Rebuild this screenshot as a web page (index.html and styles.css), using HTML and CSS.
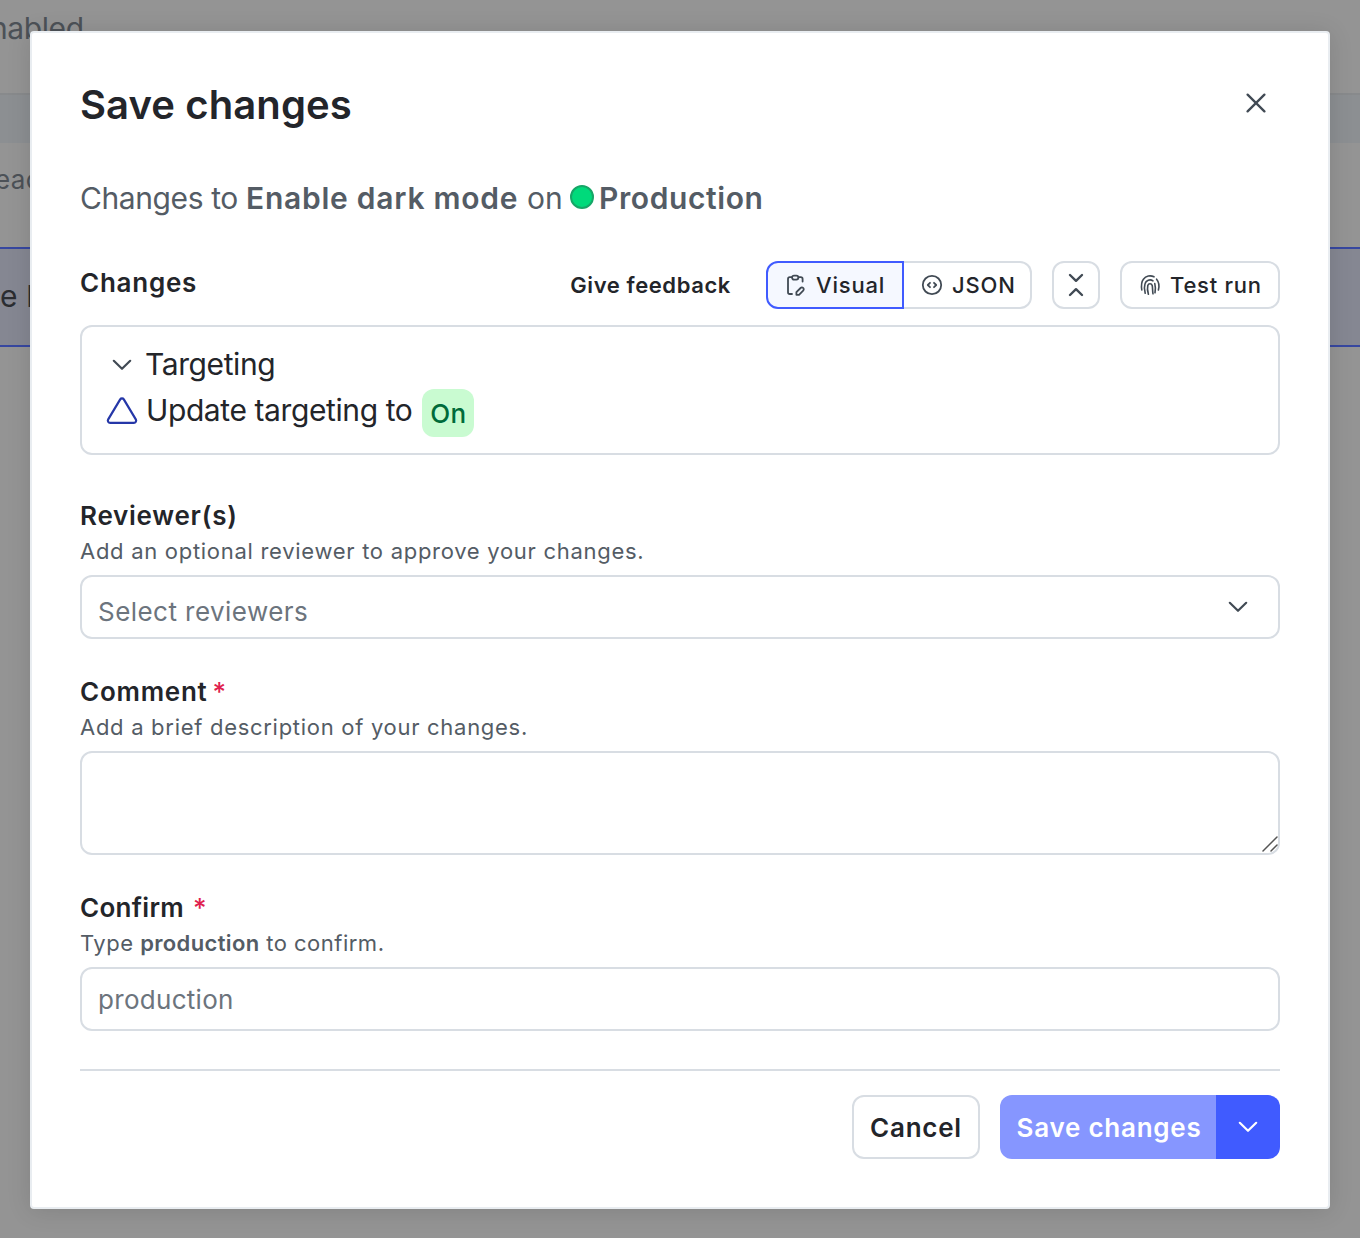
FILE: index.html
```html
<!DOCTYPE html>
<html lang="en">
<head>
<meta charset="utf-8">
<title>Save changes</title>
<link rel="stylesheet" href="styles.css">
</head>
<body>
<div class="app">
  <div class="page">
    <div class="page-head"><span class="page-status">nabled</span></div>
    <div class="page-band"></div>
    <div class="page-note">eac</div>
    <div class="page-row">e F</div>
  </div>

  <main class="modal" role="dialog" aria-labelledby="title">
    <header class="modal-header">
      <h1 class="title" id="title">Save changes</h1>
      <button class="close" aria-label="Close">
        <svg class="icon-close" viewBox="0 0 10 10"><path d="M.8.8l8.4 8.4M9.200.8L.8 9.200"/></svg>
      </button>
    </header>

    <p class="summary"><span class="summary-lead">Changes to</span> <strong class="flag-name">Enable dark mode</strong> <span class="summary-on">on</span> <span class="env-dot"></span><strong class="env-name">Production</strong></p>

    <section>
      <div class="toolbar">
        <h2 class="label toolbar-label">Changes</h2>
        <a class="feedback">Give feedback</a>
        <div class="toggle">
          <button class="btn-small toggle-on">
            <svg class="icon" viewBox="0 0 12 12"><path d="M4 2.100H2.900a.9.9 0 0 0-.9.9v6.600a.9.9 0 0 0 .9.9h1.100M7.300 2.100h1.100a.9.9 0 0 1 .9.9v1.300"/><rect x="4" y="1.300" width="3.200" height="2" rx="1"/><path d="M6.200 10.900v-1.300l2.100-2.100a.9.9 0 0 1 1.300 0 .9.9 0 0 1 0 1.300L7.500 10.900z"/></svg>
            Visual
          </button>
          <button class="btn-small toggle-off">
            <svg class="icon" viewBox="0 0 12 12"><circle cx="6" cy="6" r="4.600"/><path d="M5 4.900L3.900 6 5 7.100M7 4.900L8.100 6 7 7.100"/></svg>
            JSON
          </button>
        </div>
        <button class="btn-small btn-square" aria-label="Collapse all">
          <svg class="icon icon-collapse" viewBox="0 0 12 12"><path d="M3 1L6 3.900 9 1M3 11L6 8.100 9 11"/></svg>
        </button>
        <button class="btn-small btn-test">
          <svg class="icon icon-print" viewBox="0 0 12 12"><path d="M1.900 8.500C1.600 6.500 1.600 4.500 2.700 3.100A4.200 4.200 0 0 1 8 1.900M9.300 3.100c1.300 1.600 1.400 3.600.9 5.400M3.600 10.100C3.100 8.300 3.100 6.600 3.500 5.400A2.600 2.600 0 0 1 7.500 3.900M8.400 5.300c.4 1.500.4 2.800.1 4.600M5.200 10.600C4.700 9 4.600 7.500 4.900 6.200a1.150 1.150 0 0 1 2.200 0c.3 1.500.1 2.700.4 4.200"/></svg>
          Test run
        </button>
      </div>
      <div class="changes">
        <div class="change change-group">
          <svg class="icon-chevron" viewBox="0 0 10 6"><path d="M.9.9L5 4.900 9.100.9"/></svg>
          <span class="change-text">Targeting</span>
        </div>
        <div class="change">
          <svg class="icon-delta" viewBox="0 0 16 14"><path d="M7.100 1.200L1.100 11.200a1.150 1.150 0 0 0 1 1.750h11.800a1.150 1.150 0 0 0 1-1.750L8.900 1.200a1.070 1.070 0 0 0-1.800 0z"/></svg>
          <span class="change-text">Update targeting to</span>
          <span class="badge">On</span>
        </div>
      </div>
    </section>

    <section class="field field-first">
      <h2 class="label">Reviewer(s)</h2>
      <p class="hint">Add an optional reviewer to approve your changes.</p>
      <div class="control select">
        <span class="select-text">Select reviewers</span>
        <svg class="icon-chevron" viewBox="0 0 10 6"><path d="M.9.9L5 4.900 9.100.9"/></svg>
      </div>
    </section>

    <section class="field">
      <h2 class="label">Comment<span class="required required-near">*</span></h2>
      <p class="hint">Add a brief description of your changes.</p>
      <div class="comment-wrap">
        <textarea class="control comment" aria-label="Comment"></textarea>
        <svg class="grip" viewBox="0 0 16 16"><path d="M1 15L15 1M9 15l6-6"/></svg>
      </div>
    </section>

    <section class="field">
      <h2 class="label label-tight">Confirm<span class="required">*</span></h2>
      <p class="hint hint-tight">Type <strong class="hint-key">production</strong> to confirm.</p>
      <input class="control confirm" placeholder="production" aria-label="Confirm">
    </section>

    <footer class="footer">
      <button class="btn btn-cancel">Cancel</button>
      <div class="split">
        <button class="btn btn-save">Save changes</button>
        <button class="btn btn-more" aria-label="More options">
          <svg class="icon-chevron" viewBox="0 0 10 6"><path d="M.9.9L5 4.900 9.100.9"/></svg>
        </button>
      </div>
    </footer>
  </main>
</div>
</body>
</html>
```
FILE: styles.css
```css
* { box-sizing: border-box; }

body {
  margin: 0;
  background: #949494;
  font-family: Inter, "Liberation Sans", sans-serif;
  color: #23252a;
}

h1, h2, p { margin: 0; }

button, input, textarea { font-family: inherit; margin: 0; }

svg {
  display: block;
  flex: none;
  fill: none;
  stroke: #414a54;
  stroke-linecap: round;
  stroke-linejoin: round;
}

.app {
  position: relative;
  height: 1238px;
  padding: 31px 30px 0;
  overflow: hidden;
}

/* Page behind the dialog */
.page {
  position: absolute;
  inset: 0;
  color: #4c5157;
}

.page-head {
  height: 95px;
  padding-top: 4px;
  border-bottom: 2px solid #888a8c;
  font-size: 30px;
  letter-spacing: -.4px;
  line-height: 48px;
}

.page-status { margin-left: -10px; }

.page-band { height: 48px; background: #8c8f92; }

.page-note {
  height: 104px;
  padding-top: 17px;
  font-size: 26px;
  letter-spacing: .4px;
  line-height: 40px;
  text-indent: -5px;
}

.page-row {
  height: 100px;
  border: solid #3747a0;
  border-width: 2px 0;
  background: #858792;
  color: #2b2d31;
  font-size: 30px;
  line-height: 95px;
}

/* Dialog */
.modal {
  position: relative;
  height: 1178px;
  padding: 48px;
  border: 2px solid #e9edf1;
  border-radius: 4px;
  background: #fff;
  box-shadow: 0 2px 24px rgba(0, 0, 0, .12);
}

.modal-header {
  display: flex;
  justify-content: space-between;
  height: 48px;
}

.title {
  font-size: 40px;
  font-weight: 600;
  letter-spacing: .1px;
  line-height: 48px;
}

.close {
  display: flex;
  align-items: center;
  justify-content: center;
  width: 48px;
  height: 44px;
  padding: 0;
  border: 0;
  background: none;
}

.icon-close { width: 20px; height: 20px; stroke-width: 1.15; }

.summary {
  display: flex;
  align-items: center;
  margin-top: 45px;
  color: #545c65;
  font-size: 30px;
  line-height: 48px;
}

.summary-lead { width: 166px; letter-spacing: -.4px; }

.flag-name { width: 281px; font-weight: 600; letter-spacing: .75px; }

.summary-on { width: 43px; }

.env-name { font-weight: 600; letter-spacing: .6px; }

.env-dot {
  width: 24px;
  height: 24px;
  margin: -2px 5px 0 0;
  border: 2px solid #16a667;
  border-radius: 50%;
  background: #00da7b;
}

.label {
  padding-top: 1px;
  font-size: 26px;
  font-weight: 600;
  letter-spacing: .75px;
  line-height: 39px;
}

.label-tight { letter-spacing: .3px; }

.toolbar {
  display: flex;
  align-items: center;
  height: 48px;
  margin-top: 39px;
}

.toolbar-label { margin: -7px auto 0 0; }

.feedback {
  margin-right: 35px;
  font-size: 22px;
  font-weight: 600;
  letter-spacing: .6px;
}

.btn-small {
  display: flex;
  align-items: center;
  gap: 8px;
  height: 48px;
  padding: 0 16px;
  border: 2px solid #d8dde3;
  border-radius: 12px;
  background: #fff;
  color: #23252a;
  font-size: 22px;
  font-weight: 500;
  letter-spacing: .8px;
  white-space: nowrap;
}

.toggle { display: flex; margin-right: 20px; }

.toggle-on {
  width: 138px;
  border-color: #405bff;
  border-radius: 12px 0 0 12px;
  background: #f5f8ff;
}

.toggle-off { width: 128px; border-left: 0; border-radius: 0 12px 12px 0; }

.btn-square { width: 48px; margin-right: 20px; padding: 0 10px; }

.btn-test { width: 160px; letter-spacing: .75px; }

.icon { width: 24px; height: 24px; stroke-width: .9; }

.icon-collapse { stroke-width: 1.2; }

.icon-print { stroke-width: .8; }

.icon-chevron { width: 20px; height: 12px; stroke-width: 1.1; }

.changes {
  height: 130px;
  margin-top: 16px;
  padding: 15px 24px;
  border: 2px solid #d8dde3;
  border-radius: 12px;
}

.change {
  display: flex;
  align-items: center;
  height: 46px;
  font-size: 30px;
  letter-spacing: -.4px;
  line-height: 44px;
}

.change-text { padding-bottom: 2px; }

.change-group .icon-chevron { margin: 0 13px 0 6px; }

.icon-delta {
  width: 32px;
  height: 28px;
  margin-right: 8px;
  stroke: #2537a8;
  stroke-width: 1.1;
}

.badge {
  width: 52px;
  height: 48px;
  margin: 4px 0 0 10px;
  border-radius: 12px;
  background: #c9fbd1;
  color: #006b3a;
  font-size: 26px;
  font-weight: 500;
  letter-spacing: .4px;
  line-height: 49px;
  text-align: center;
}

.field { margin-top: 32px; }

.field-first { margin-top: 40px; }

.hint {
  height: 36px;
  margin-bottom: 4px;
  color: #545c65;
  font-size: 22px;
  letter-spacing: .71px;
  line-height: 32px;
}

.hint-tight { letter-spacing: .5px; }

.hint-key { font-weight: 600; letter-spacing: .35px; }

.control {
  display: block;
  width: 100%;
  height: 64px;
  padding: 0 16px;
  border: 2px solid #d8dde3;
  border-radius: 12px;
  background: #fff;
  color: #23252a;
  font-size: 26px;
  letter-spacing: .45px;
}

.select {
  display: flex;
  align-items: center;
  justify-content: space-between;
  padding-right: 30px;
}

.select-text { padding-top: 8px; color: #6c747d; }

.comment-wrap { position: relative; }

.comment { height: 104px; resize: none; }

.grip {
  position: absolute;
  right: 2px;
  bottom: 3px;
  width: 16px;
  height: 16px;
  stroke: #555;
  stroke-width: 1.5;
}

.confirm { letter-spacing: .3px; }

.confirm::placeholder { color: #6c747d; opacity: 1; }

.required { margin-left: 9px; color: #e01f4f; font-weight: 500; }

.required-near { margin-left: 5px; }

.footer {
  display: flex;
  justify-content: flex-end;
  gap: 20px;
  margin-top: 38px;
  padding-top: 24px;
  border-top: 2px solid #d8dde3;
}

.btn {
  display: flex;
  align-items: center;
  justify-content: center;
  height: 64px;
  padding: 0;
  border: 0;
  font-size: 26px;
  font-weight: 600;
  letter-spacing: .75px;
}

.btn-cancel {
  width: 128px;
  border: 2px solid #d8dde3;
  border-radius: 12px;
  background: #fff;
  color: #23252a;
}

.split { display: flex; }

.btn-save {
  width: 216px;
  padding-left: 2px;
  border-radius: 12px 0 0 12px;
  background: #8696ff;
  color: #fff;
}

.btn-more { width: 64px; border-radius: 0 12px 12px 0; background: #405bff; }

.btn-more .icon-chevron { stroke: #fff; }
```
